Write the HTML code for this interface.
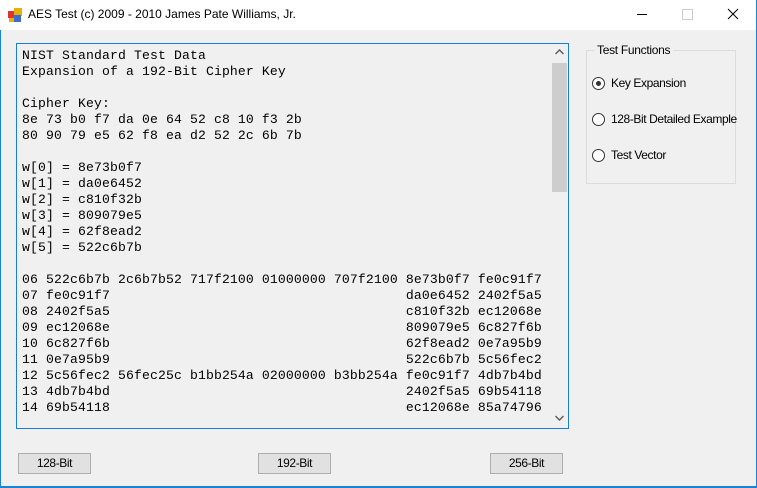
<!DOCTYPE html>
<html><head><meta charset="utf-8"><style>
body{margin:0;width:757px;height:488px;overflow:hidden;background:#f0f0f0;font-family:"Liberation Sans",sans-serif;}
.win{position:absolute;left:0;top:0;width:755px;height:486px;border:1px solid #1883d7;border-top:none;background:#f0f0f0;}
.title{position:absolute;left:0;top:0;width:757px;height:30px;background:#fff;}
.title .t{position:absolute;left:28px;top:7px;font-size:12px;color:#000;}
.tb{position:absolute;left:16px;top:43px;width:551px;height:384px;border:1px solid #1a7fd4;background:#f0f0f0;overflow:hidden;}
.tb pre{margin:0;position:absolute;left:5px;top:4px;font-family:"Liberation Mono",monospace;font-size:13.1px;letter-spacing:0.14px;line-height:16px;color:#000;}
.sb{position:absolute;left:534px;top:0;width:17px;height:384px;background:#f0f0f0;}
.thumb{position:absolute;left:1px;top:19px;width:15px;height:129px;background:#cdcdcd;}
.gb{position:absolute;left:586px;top:50px;width:148px;height:132px;border:1px solid #dcdcdc;}
.gbt{position:absolute;left:594px;top:43px;background:#f0f0f0;padding:0 3px;font-size:12px;letter-spacing:-0.3px;}
.r{position:absolute;left:592px;font-size:12px;color:#000;letter-spacing:-0.4px;}
.r i{position:absolute;left:0;top:0;width:11px;height:11px;border:1px solid #333;border-radius:50%;background:#fff;}
.r i b{position:absolute;left:3px;top:3px;width:5px;height:5px;border-radius:50%;background:#333;}
.r span{position:absolute;left:19px;top:-1px;white-space:nowrap;}
.btn{position:absolute;top:453px;width:71px;height:19px;border:1px solid #adadad;background:#e1e1e1;font-size:12px;text-align:center;line-height:19px;letter-spacing:-0.4px;}
</style></head><body>
<div class="win"></div>
<div class="title">
<svg style="position:absolute;left:8px;top:8px" width="14" height="14"><rect x="0" y="3" width="7" height="7" fill="#d33"/><rect x="6" y="0" width="8" height="8" fill="#e8b000"/><rect x="6" y="7" width="7" height="7" fill="#3a6fd0"/><rect x="1" y="10" width="5" height="4" fill="#e8b000"/></svg>
<div class="t">AES Test (c) 2009 - 2010 James Pate Williams, Jr.</div>
<div style="position:absolute;left:637px;top:14px;width:10px;height:1px;background:#000"></div>
<div style="position:absolute;left:682px;top:9px;width:9px;height:9px;border:1px solid #ccc"></div>
<svg style="position:absolute;left:727px;top:8px" width="12" height="12"><path d="M1 1L11 11M11 1L1 11" stroke="#000" stroke-width="1"/></svg>
</div>
<div style="position:absolute;left:0;top:30px;width:1px;height:458px;background:#1883d7"></div>
<div style="position:absolute;left:756px;top:0;width:1px;height:488px;background:#1883d7"></div>
<div style="position:absolute;left:0;top:487px;width:757px;height:1px;background:#1883d7"></div>
<div class="tb"><pre>NIST Standard Test Data
Expansion of a 192-Bit Cipher Key

Cipher Key:
8e 73 b0 f7 da 0e 64 52 c8 10 f3 2b
80 90 79 e5 62 f8 ea d2 52 2c 6b 7b

w[0] = 8e73b0f7
w[1] = da0e6452
w[2] = c810f32b
w[3] = 809079e5
w[4] = 62f8ead2
w[5] = 522c6b7b

06 522c6b7b 2c6b7b52 717f2100 01000000 707f2100 8e73b0f7 fe0c91f7
07 fe0c91f7                                     da0e6452 2402f5a5
08 2402f5a5                                     c810f32b ec12068e
09 ec12068e                                     809079e5 6c827f6b
10 6c827f6b                                     62f8ead2 0e7a95b9
11 0e7a95b9                                     522c6b7b 5c56fec2
12 5c56fec2 56fec25c b1bb254a 02000000 b3bb254a fe0c91f7 4db7b4bd
13 4db7b4bd                                     2402f5a5 69b54118
14 69b54118                                     ec12068e 85a74796</pre>
<div class="sb"><div class="thumb"></div>
<svg style="position:absolute;left:4px;top:5px" width="9" height="6"><path d="M0.5 5L4.5 1L8.5 5" stroke="#606060" stroke-width="1.5" fill="none"/></svg>
<svg style="position:absolute;left:4px;top:371px" width="9" height="6"><path d="M0.5 1L4.5 5L8.5 1" stroke="#606060" stroke-width="1.5" fill="none"/></svg>
</div></div>
<div class="gb"></div>
<div class="gbt">Test Functions</div>
<div class="r" style="top:77px"><i><b></b></i><span>Key Expansion</span></div>
<div class="r" style="top:113px"><i></i><span>128-Bit Detailed Example</span></div>
<div class="r" style="top:149px"><i></i><span>Test Vector</span></div>
<div class="btn" style="left:18px">128-Bit</div>
<div class="btn" style="left:258px">192-Bit</div>
<div class="btn" style="left:490px">256-Bit</div>
</body></html>
